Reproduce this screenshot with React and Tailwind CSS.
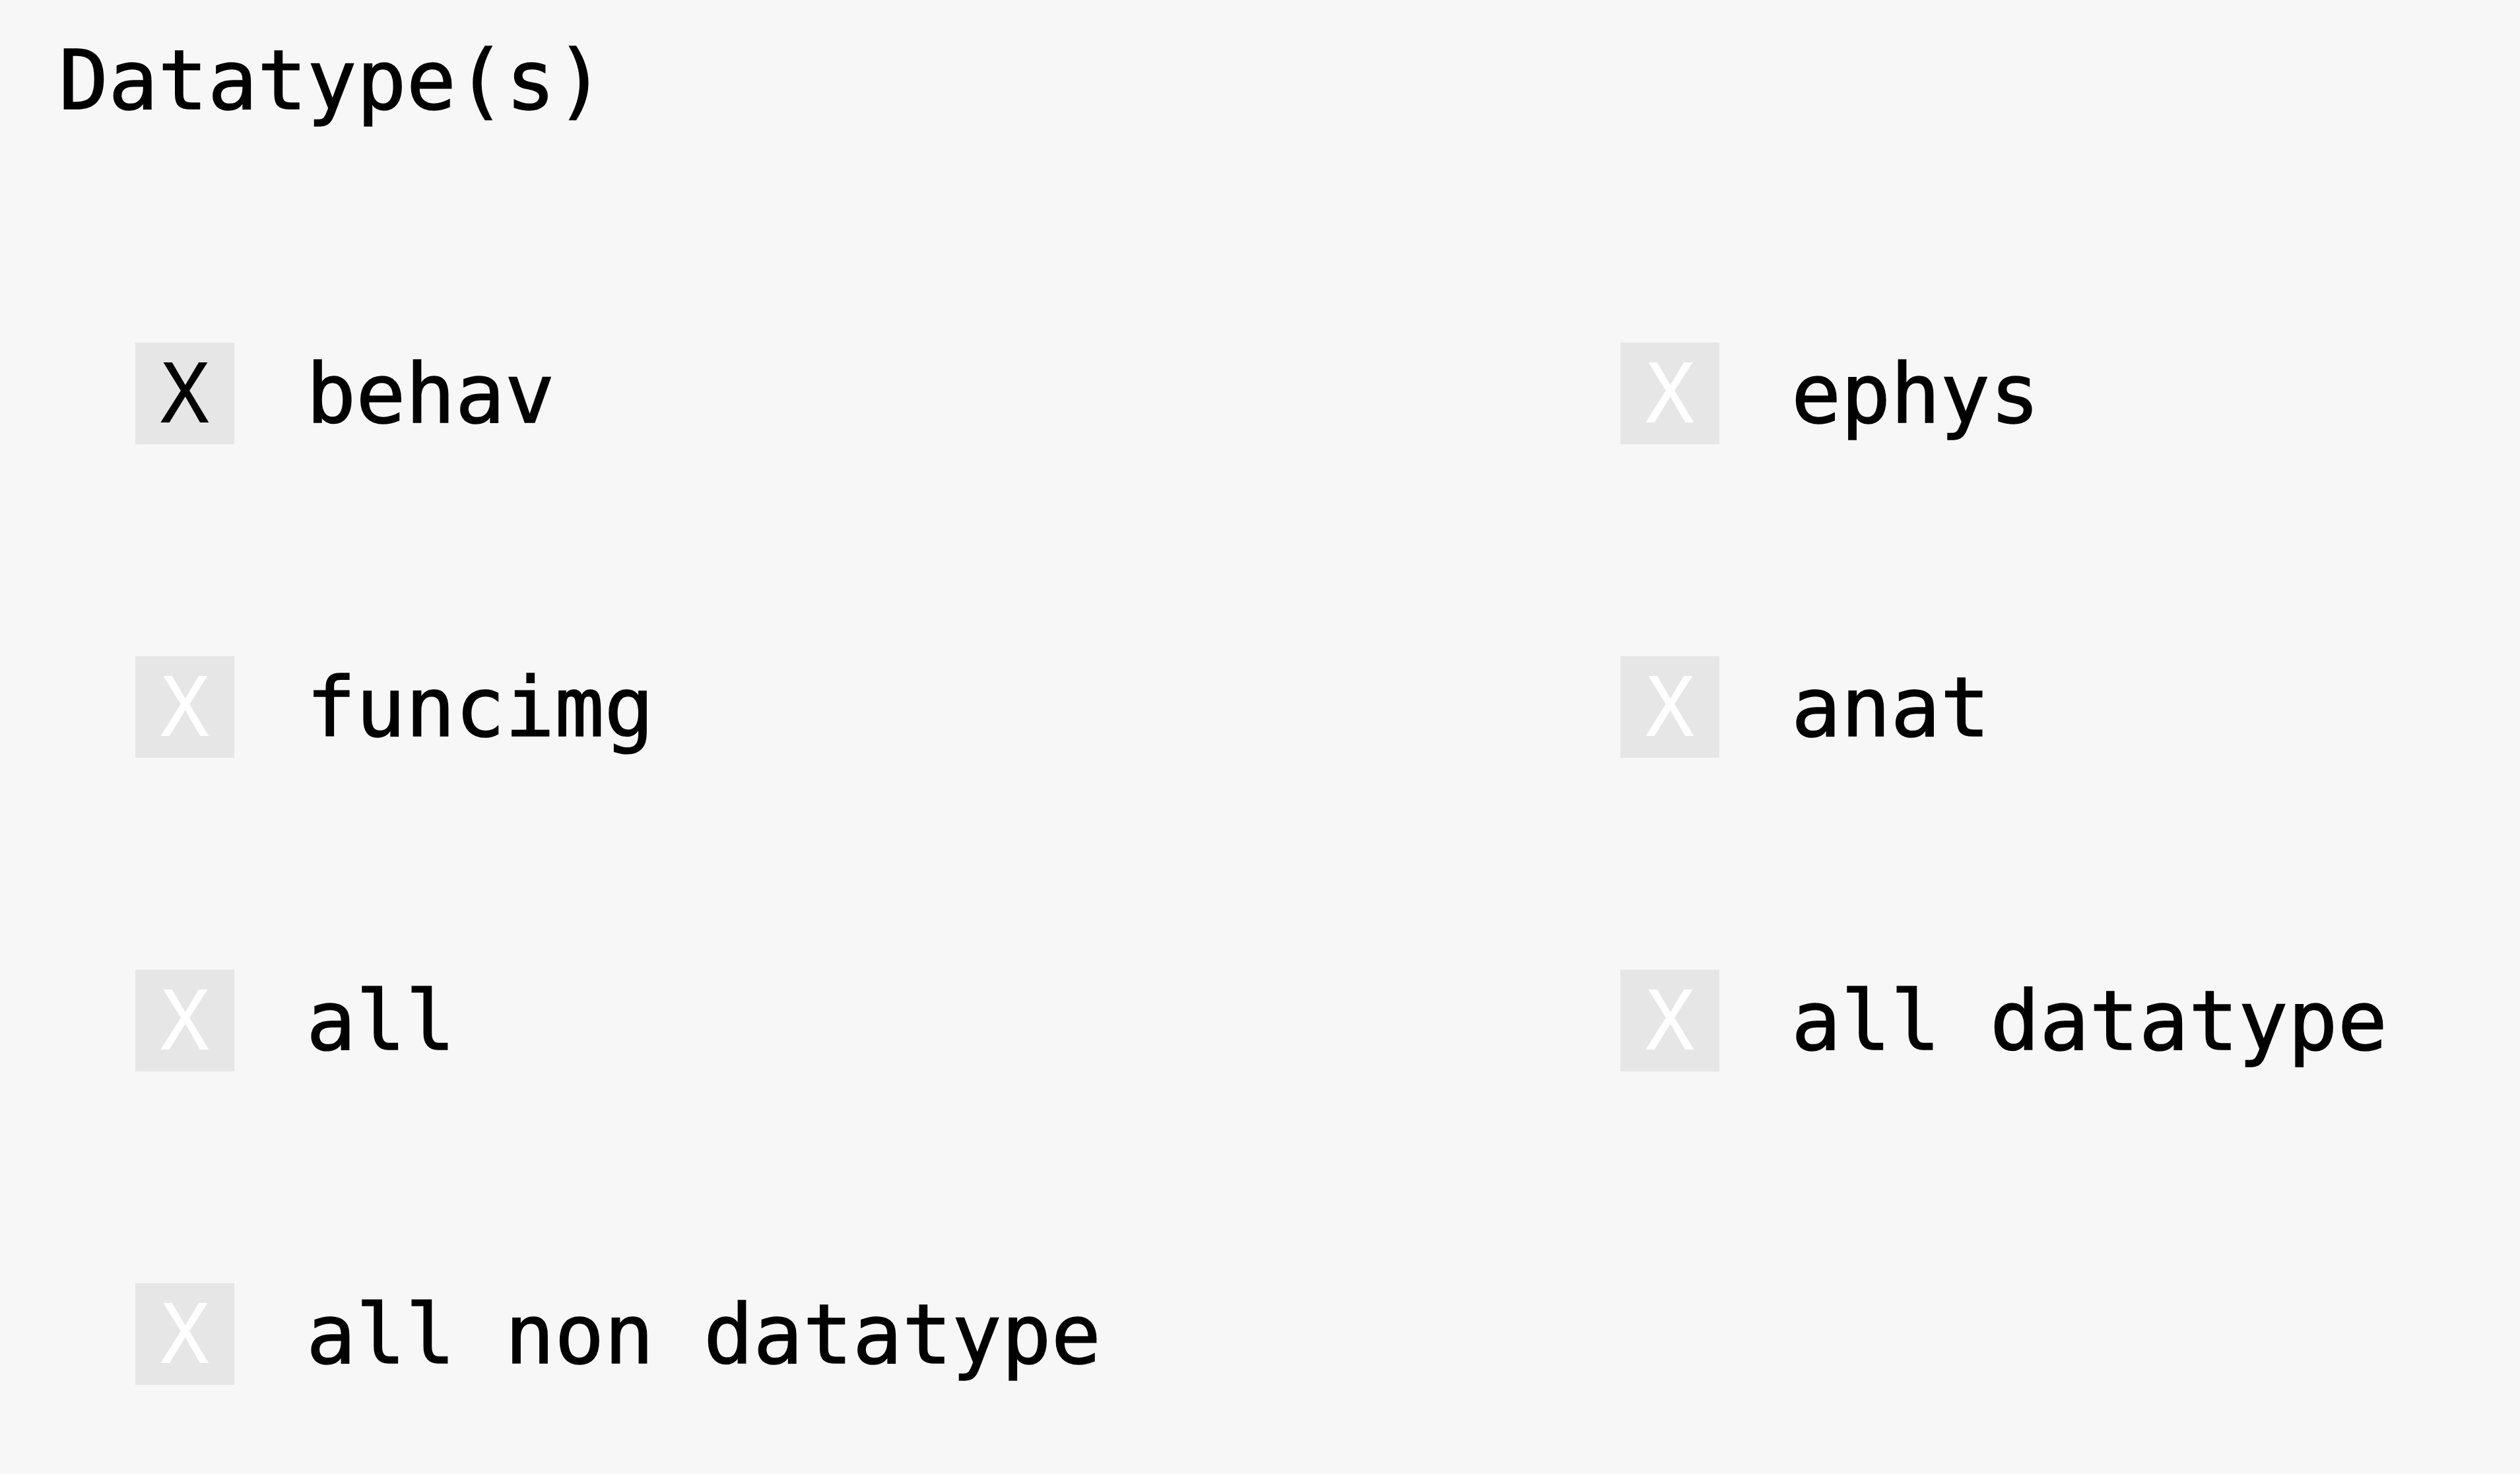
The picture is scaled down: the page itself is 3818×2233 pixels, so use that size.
import React from "react";

const items = [
  { label: "behav", checked: true },
  { label: "ephys", checked: false },
  { label: "funcimg", checked: false },
  { label: "anat", checked: false },
  { label: "all", checked: false },
  { label: "all datatype", checked: false },
  { label: "all non datatype", checked: false },
];

function Item({ label, checked }) {
  return (
    <div className="flex items-center gap-[109px]">
      <div
        className={
          "flex h-[154px] w-[150px] items-center justify-center bg-[#e6e6e6] leading-none [-webkit-text-stroke:0px_transparent] " +
          (checked ? "text-black" : "text-white")
        }
      >
        X
      </div>
      <span className="leading-none text-black">{label}</span>
    </div>
  );
}

export default function App() {
  return (
    <div
      className="min-h-screen w-full bg-[#f7f7f7] text-[125px] text-black [-webkit-text-stroke:1.5px_currentColor]"
      style={{ fontFamily: '"DejaVu Sans Mono", "Liberation Mono", monospace' }}
    >
      <div className="pl-[89px] pt-[59px] leading-none">Datatype(s)</div>
      <div className="mt-[335px] grid grid-cols-[2250px_1fr] gap-y-[321px] pl-[205px]">
        {items.map((it) => (
          <Item key={it.label} {...it} />
        ))}
      </div>
    </div>
  );
}
